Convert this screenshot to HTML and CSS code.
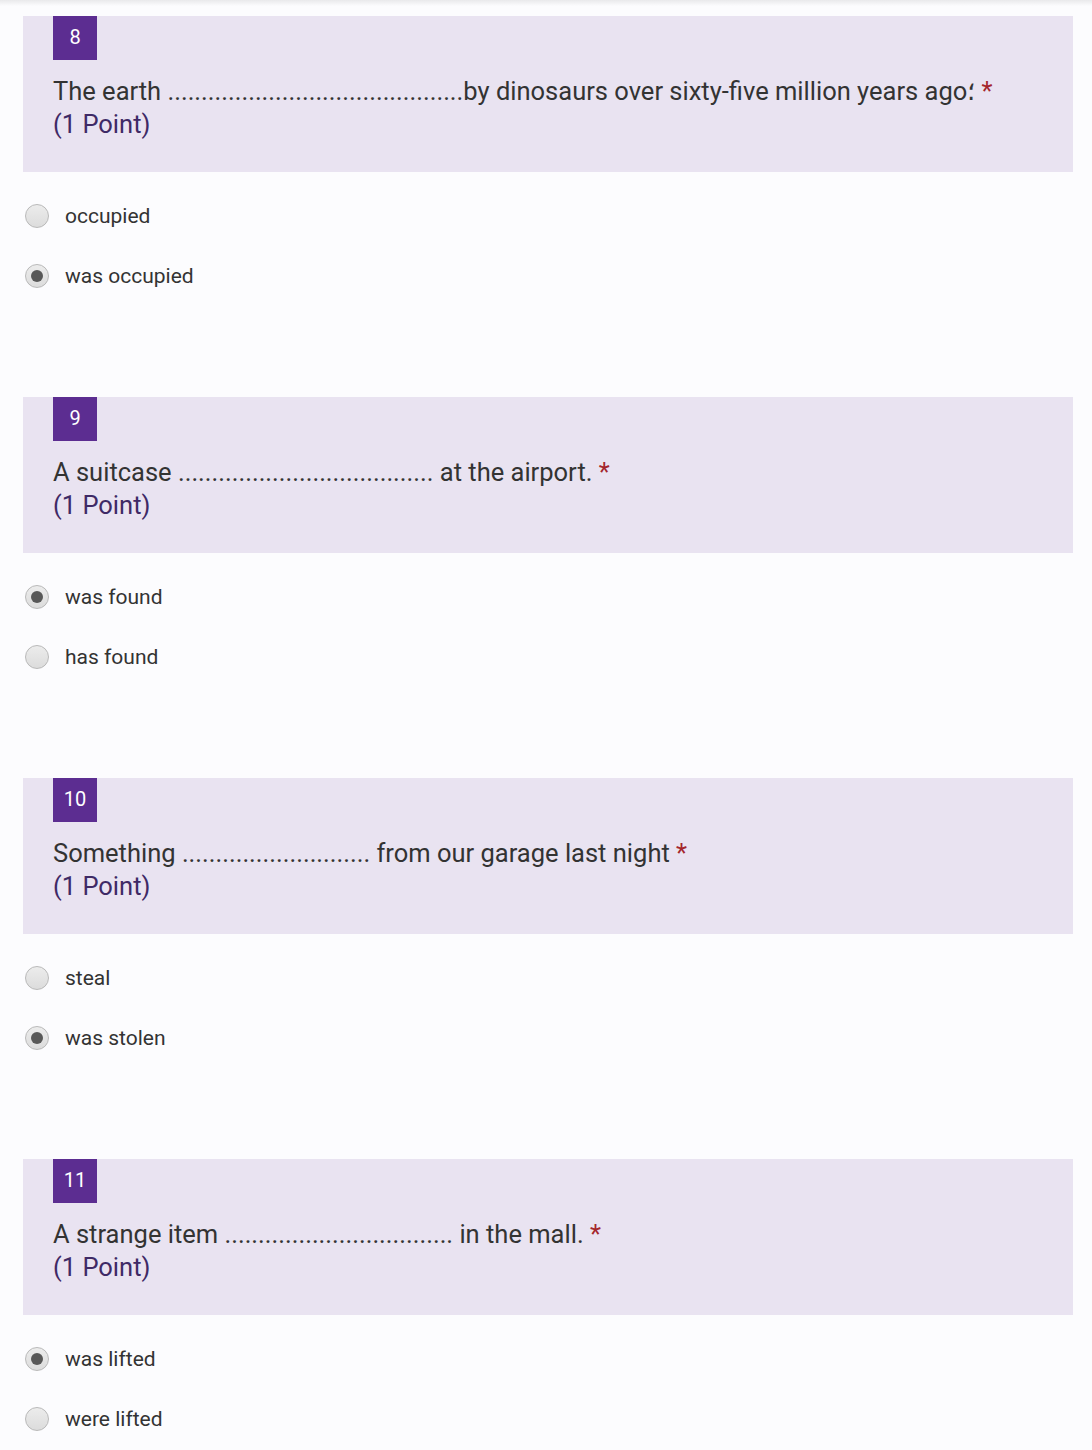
FILE: index.html
```html
<!DOCTYPE html>
<html lang="en">
<head>
<meta charset="utf-8">
<title>Quiz</title>
<link rel="stylesheet" href="styles.css">
</head>
<body>
<div class="topshade"></div>
<main class="form">
  <section class="question">
    <div class="card">
      <div class="badge">8</div>
      <div class="title">The earth ............................................by dinosaurs over sixty-five million years ago؛ <span class="req">*</span></div>
      <div class="points">(1 Point)</div>
    </div>
    <ul class="options">
      <li class="option"><span class="radio"></span><span class="label">occupied</span></li>
      <li class="option"><span class="radio checked"></span><span class="label">was occupied</span></li>
    </ul>
  </section>

  <section class="question">
    <div class="card">
      <div class="badge">9</div>
      <div class="title">A suitcase ...................................... at the airport. <span class="req">*</span></div>
      <div class="points">(1 Point)</div>
    </div>
    <ul class="options">
      <li class="option"><span class="radio checked"></span><span class="label">was found</span></li>
      <li class="option"><span class="radio"></span><span class="label">has found</span></li>
    </ul>
  </section>

  <section class="question">
    <div class="card">
      <div class="badge">10</div>
      <div class="title">Something ............................ from our garage last night <span class="req">*</span></div>
      <div class="points">(1 Point)</div>
    </div>
    <ul class="options">
      <li class="option"><span class="radio"></span><span class="label">steal</span></li>
      <li class="option"><span class="radio checked"></span><span class="label">was stolen</span></li>
    </ul>
  </section>

  <section class="question">
    <div class="card">
      <div class="badge">11</div>
      <div class="title">A strange item .................................. in the mall. <span class="req">*</span></div>
      <div class="points">(1 Point)</div>
    </div>
    <ul class="options">
      <li class="option"><span class="radio checked"></span><span class="label">was lifted</span></li>
      <li class="option"><span class="radio"></span><span class="label">were lifted</span></li>
    </ul>
  </section>
</main>
</body>
</html>
```

FILE: styles.css
```css
html, body {
  margin: 0;
  padding: 0;
  background: #fcfcfe;
  font-family: Roboto, "Liberation Sans", sans-serif;
}

.topshade {
  height: 6px;
  background: linear-gradient(#e9e9eb, #fcfcfe);
}

.form {
  padding: 10px 19px 0 23px;
}

.question {
  margin-bottom: 91px;
}

.question:last-child {
  margin-bottom: 0;
}

.card {
  background: #e9e3f1;
  padding: 0 30px 31px 30px;
}

.badge {
  width: 44px;
  height: 44px;
  background: #5c2d91;
  color: #ffffff;
  font-size: 20px;
  line-height: 42px;
  text-align: center;
}

.title {
  margin-top: 15px;
  font-size: 25.5px;
  line-height: 33px;
  color: #333333;
}

.req {
  color: #a4262c;
}

.points {
  font-size: 25.5px;
  line-height: 33px;
  color: #3f2a66;
}

.options {
  list-style: none;
  margin: 14px 0 0 0;
  padding: 0 0 0 2px;
}

.option {
  display: flex;
  align-items: center;
  height: 60px;
}

.radio {
  box-sizing: border-box;
  width: 24px;
  height: 24px;
  border-radius: 50%;
  border: 1px solid #b9b9b9;
  background: linear-gradient(#ececec, #dcdcdc);
  display: flex;
  align-items: center;
  justify-content: center;
  flex: none;
}

.radio.checked::after {
  content: "";
  width: 12px;
  height: 12px;
  border-radius: 50%;
  background: #585858;
}

.label {
  margin-left: 16px;
  font-size: 21px;
  color: #333333;
}
```
